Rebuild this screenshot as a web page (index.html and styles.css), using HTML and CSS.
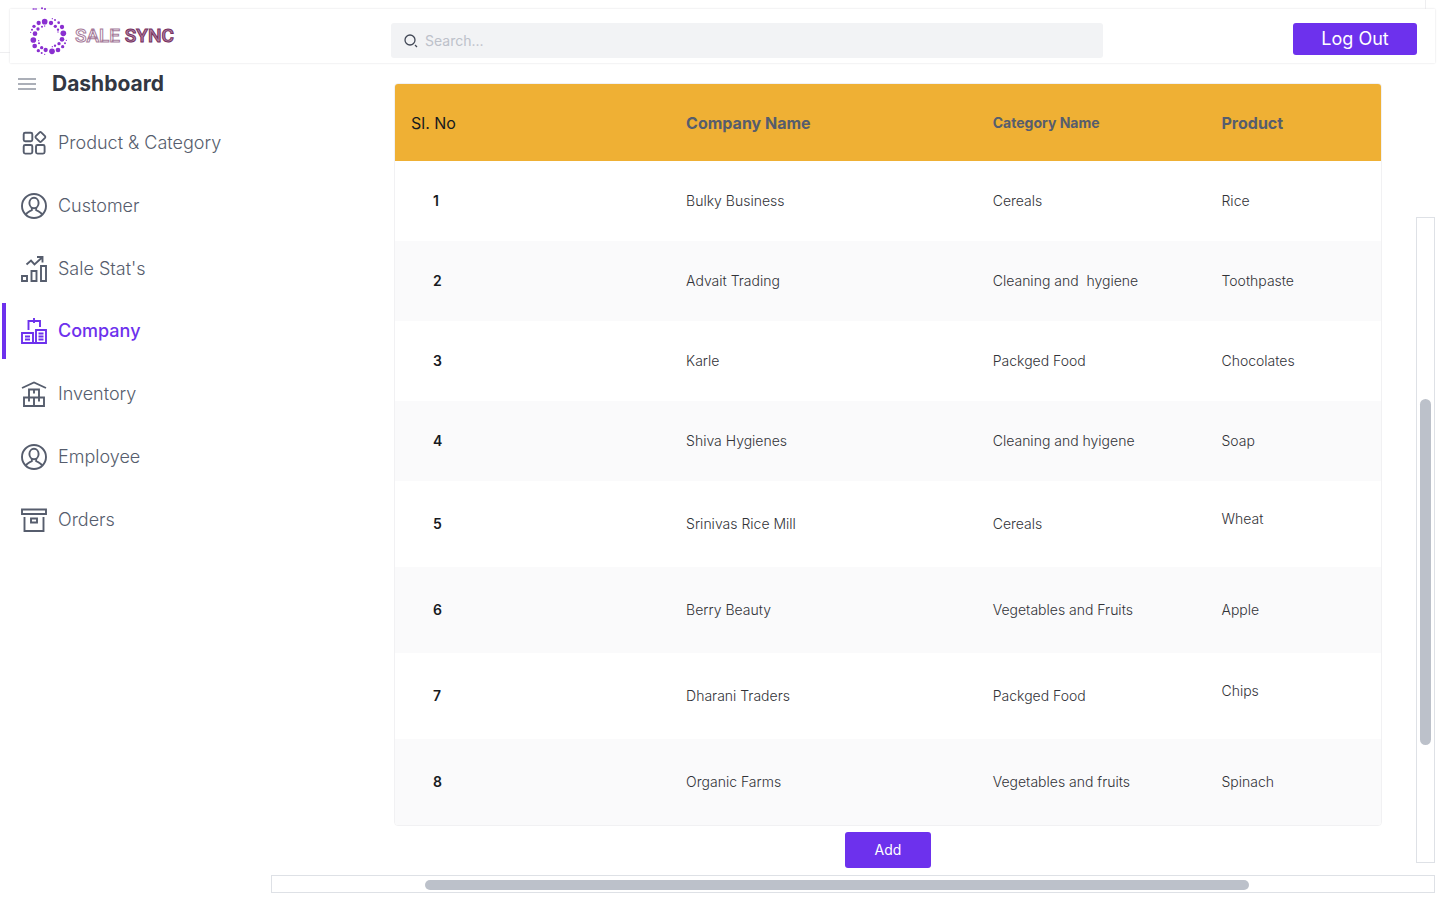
FILE: index.html
```html
<!DOCTYPE html>
<html lang="en">
<head>
<meta charset="utf-8">
<meta name="viewport" content="width=device-width, initial-scale=1">
<title>Sale Sync</title>
<link rel="stylesheet" href="styles.css">
</head>
<body>
<div class="backdrop"></div>
<header class="topbar">
  <a class="brand" href="#">
    <svg class="brand-mark" viewBox="90 48 114 114" aria-hidden="true">
      <g fill="#8a2fd0">
        <circle cx="134" cy="62" r="8.500"/><circle cx="153" cy="66" r="6.500"/><circle cx="116" cy="66" r="6.500"/>
        <circle cx="186" cy="78" r="6.500"/><circle cx="190" cy="97" r="8.500"/><circle cx="186" cy="115" r="7"/>
        <circle cx="105" cy="98" r="7"/><circle cx="100" cy="117" r="8.500"/><circle cx="104" cy="135" r="7"/>
        <circle cx="137" cy="147" r="6.500"/><circle cx="156" cy="151" r="8.500"/><circle cx="174" cy="147" r="7"/>
        <circle cx="102" cy="76" r="5"/><circle cx="114" cy="84" r="5"/><circle cx="166" cy="76" r="5"/>
        <circle cx="176" cy="65" r="4"/><circle cx="177" cy="128" r="5"/><circle cx="188" cy="137" r="5"/>
        <circle cx="115" cy="149" r="5"/><circle cx="125" cy="140" r="5"/>
        <circle cx="126" cy="77" r="3"/><circle cx="134" cy="75" r="2"/><circle cx="174" cy="86" r="3.500"/>
        <circle cx="174" cy="93" r="2"/><circle cx="165" cy="57" r="3"/><circle cx="157" cy="53" r="2"/>
        <circle cx="96" cy="86" r="3"/><circle cx="92" cy="94" r="2"/><circle cx="116" cy="119" r="2"/>
        <circle cx="117" cy="127" r="3"/><circle cx="165" cy="134" r="3.500"/><circle cx="157" cy="137" r="2"/>
        <circle cx="195" cy="127" r="3"/><circle cx="199" cy="118" r="2"/><circle cx="125" cy="156" r="3"/>
        <circle cx="134" cy="160" r="2"/>
        <ellipse cx="101" cy="24" rx="4" ry="2"/><ellipse cx="108" cy="24" rx="3" ry="2"/><circle cx="126" cy="22" r="3"/><circle cx="135" cy="24" r="3"/>
      </g>
    </svg>
    <span class="brand-name"><span class="brand-light">SALE</span> <span class="brand-bold">SYNC</span></span>
  </a>
  <label class="search">
    <svg viewBox="0 0 14 14" aria-hidden="true"><circle cx="6" cy="6" r="5"/><path d="M11 11 L13 13"/></svg>
    <input type="search" placeholder="Search..." aria-label="Search">
  </label>
  <button class="button logout" type="button">Log Out</button>
</header>

<div class="layout">
  <nav class="sidebar" aria-label="Main">
    <div class="sidebar-head">
      <button class="menu-button" type="button" aria-label="Toggle menu">
        <svg viewBox="0 0 18 12"><path d="M0 1H18M0 6H18M0 11H18"/></svg>
      </button>
      <h1>Dashboard</h1>
    </div>
    <ul class="nav-list">
      <li><a href="#">
        <svg class="icon" viewBox="0 0 26 26"><rect x="2.700" y="2.700" width="8.600" height="8.600" rx="1.500"/><rect x="2.700" y="15" width="8.600" height="8.600" rx="1.500"/><rect x="15" y="15" width="8.600" height="8.600" rx="1.500"/><path d="M18.600 2.400 L14.800 6.200 Q14.100 7 14.800 7.800 L18.600 11.600 Q19.400 12.300 20.200 11.600 L24 7.800 Q24.700 7 24 6.200 L20.200 2.400 Q19.400 1.700 18.600 2.400Z"/></svg>
        Product &amp; Category</a></li>
      <li><a href="#">
        <svg class="icon" viewBox="0 0 26 26"><circle cx="13" cy="13" r="12"/><ellipse cx="13" cy="10" rx="4.600" ry="5.200"/><path d="M5 21.500 Q6 19.500 10.800 17.200 V14.500 M21 21.500 Q20 19.500 15.200 17.200 V14.500"/></svg>
        Customer</a></li>
      <li><a href="#">
        <svg class="icon" viewBox="0 0 26 26"><path d="M1 20H6V25H1ZM10.500 15H15.500V25H10.500ZM20 10H25V25H20ZM5.500 8.500 L10 4.500 L13.500 8.500 L21 1.500 M16 1H21.500V6.500"/></svg>
        Sale Stat's</a></li>
      <li><a class="active" href="#" aria-current="page">
        <svg class="icon" viewBox="0 0 26 26"><path d="M1 15H12V25H1ZM15 12H25V25H15ZM12 25H15M7.500 12V3H19V9M13 0V5M4 18.500H9M4 21.500H9M17.500 15.500H22.500M17.500 18.500H22.500M17.500 21.500H22.500"/></svg>
        Company</a></li>
      <li><a href="#">
        <svg class="icon" viewBox="0 0 26 26"><path d="M1 7 L13 1.500 L25 7 M8 8.500H18V16.500H8ZM3 16.500H23V25H3ZM13 16.500V25M13 8.500V12.500M8 16.500V20.500M18 16.500V20.500"/></svg>
        Inventory</a></li>
      <li><a href="#">
        <svg class="icon" viewBox="0 0 26 26"><circle cx="13" cy="13" r="12"/><ellipse cx="13" cy="10" rx="4.600" ry="5.200"/><path d="M5 21.500 Q6 19.500 10.800 17.200 V14.500 M21 21.500 Q20 19.500 15.200 17.200 V14.500"/></svg>
        Employee</a></li>
      <li><a href="#">
        <svg class="icon" viewBox="0 0 26 26"><path d="M1 2.500H25V7H1ZM3.500 10V24H22.500V10M10 11.500H16V15.500H10Z"/></svg>
        Orders</a></li>
    </ul>
  </nav>

  <main class="content">
    <section class="companies">
      <div class="table-frame">
        <table>
          <thead>
            <tr><th class="col-number" scope="col">Sl. No</th><th class="col-company" scope="col">Company Name</th><th class="col-category" scope="col">Category Name</th><th class="col-product" scope="col">Product</th></tr>
          </thead>
          <tbody>
            <tr><td>1</td><td>Bulky Business</td><td>Cereals</td><td>Rice</td></tr>
            <tr><td>2</td><td>Advait Trading</td><td>Cleaning and&nbsp; hygiene</td><td>Toothpaste</td></tr>
            <tr><td>3</td><td>Karle</td><td>Packged Food</td><td>Chocolates</td></tr>
            <tr><td>4</td><td>Shiva Hygienes</td><td>Cleaning and hyigene</td><td>Soap</td></tr>
            <tr class="tall"><td>5</td><td>Srinivas Rice Mill</td><td>Cereals</td><td class="raised">Wheat</td></tr>
            <tr class="tall"><td>6</td><td>Berry Beauty</td><td>Vegetables and Fruits</td><td>Apple</td></tr>
            <tr class="tall"><td>7</td><td>Dharani Traders</td><td>Packged Food</td><td class="raised">Chips</td></tr>
            <tr class="tall"><td>8</td><td>Organic Farms</td><td>Vegetables and fruits</td><td>Spinach</td></tr>
          </tbody>
        </table>
      </div>
      <button class="button add" type="button">Add</button>
    </section>
    <div class="track track-vertical"><div class="thumb"></div></div>
    <div class="track track-horizontal"><div class="thumb"></div></div>
  </main>
</div>
</body>
</html>
```
FILE: styles.css
```css
* {
  box-sizing: border-box;
}

body {
  margin: 0;
  position: relative;
  background: #fff;
  color: #323338;
  font-family: Inter, "Liberation Sans", sans-serif;
  font-size: 14px;
  line-height: 20px;
}

a {
  color: inherit;
  text-decoration: none;
}

button,
input {
  font: inherit;
}

.backdrop {
  position: absolute;
  top: 0;
  left: 0;
  right: 14px;
  height: 53px;
  border: solid #eeeef0;
  border-width: 0 1px 1px 0;
}

.topbar {
  position: relative;
  display: grid;
  grid-template-columns: 381px 1fr 332px;
  align-items: start;
  margin: 9px 5px 0 10px;
  padding: 14px 0 5px;
  background: #fff;
  box-shadow: 0 0 2px #dcdce0;
}

.brand {
  display: flex;
  align-items: center;
  gap: 7px;
  height: 26px;
  padding-left: 20px;
}

.brand-mark {
  width: 38px;
  height: 38px;
  overflow: visible;
}

.brand-name {
  font-family: Roboto, sans-serif;
  font-size: 19px;
  font-weight: 500;
}

.brand-light {
  color: #fff;
  -webkit-text-stroke: 1px #a67b9a;
}

.brand-bold {
  color: #b583a3;
  -webkit-text-stroke: 1px #74305f;
}

.search {
  display: flex;
  align-items: center;
  gap: 7px;
  height: 35px;
  padding: 0 13px;
  border-radius: 3px;
  background: #f2f3f5;
}

.search svg {
  width: 14px;
  height: 14px;
  flex: none;
  fill: none;
  stroke: #424856;
  stroke-width: 1.3;
}

.search input {
  flex: 1;
  min-width: 0;
  padding: 0;
  border: 0;
  outline: 0;
  background: none;
}

.search input::placeholder {
  color: #bdc1ca;
}

.button {
  border: 0;
  border-radius: 3px;
  background: #6d31ed;
  color: #fff;
}

.logout {
  justify-self: end;
  width: 124px;
  height: 32px;
  margin-right: 18px;
  font-size: 18px;
}

.layout {
  display: grid;
  grid-template-columns: 271px 1fr;
  padding-right: 5px;
}

.sidebar-head {
  display: flex;
  align-items: center;
  gap: 16px;
  height: 42px;
  padding-left: 18px;
}

.sidebar-head h1 {
  margin: 0;
  color: #323743;
  font-size: 21px;
  font-weight: 700;
}

.menu-button {
  display: flex;
  padding: 0;
  border: 0;
  background: none;
}

.menu-button svg {
  width: 18px;
  height: 12px;
  stroke: #9095a1;
  stroke-width: 1.6;
}

.nav-list {
  display: grid;
  grid-auto-rows: 1fr;
  align-items: center;
  min-height: 439px;
  margin: 7px 0 0;
  padding: 0 0 0 2px;
  list-style: none;
}

.nav-list a {
  display: flex;
  align-items: center;
  gap: 11px;
  height: 56px;
  padding-left: 15px;
  border-left: 4px solid transparent;
  color: #565d6d;
  font-size: 18px;
  font-weight: 300;
}

.nav-list .active {
  border-color: #6d31ed;
  color: #6d31ed;
  font-weight: 500;
}

.icon {
  width: 26px;
  height: 26px;
  flex: none;
  fill: none;
  stroke: currentColor;
  stroke-width: 1.9;
}

.content {
  display: grid;
  grid-template-columns: 1fr 19px;
}

.companies {
  display: flex;
  flex-direction: column;
  align-items: center;
  gap: 6px;
  padding: 20px 34px 7px 123px;
}

.table-frame {
  width: 100%;
  overflow: hidden;
  border: 1px solid #f1f1f3;
  border-radius: 4px;
}

table {
  width: 100%;
  border-collapse: collapse;
  table-layout: fixed;
}

th,
td {
  padding: 0 0 0 16px;
  text-align: left;
}

thead tr {
  height: 77px;
  background: #efb034;
}

th {
  color: #565d6d;
  font-size: 16px;
  font-weight: 700;
}

.col-number {
  width: 27.9%;
  color: #171a1f;
  font-weight: 400;
}

.col-company {
  width: 31.1%;
}

.col-category {
  width: 23.2%;
  font-size: 14px;
}

tbody tr {
  height: 80px;
}

tbody .tall {
  height: 86px;
}

tbody tr:nth-child(even) {
  background: #fafafb;
}

td {
  font-weight: 300;
}

td:first-child {
  padding-left: 38px;
  color: #171a1f;
  font-weight: 600;
}

td.raised {
  padding-bottom: 10px;
}

.add {
  width: 86px;
  height: 36px;
}

.track {
  display: grid;
  border: 1px solid #dee1e6;
}

.track-vertical {
  grid-template-rows: 181fr 345fr 117fr;
  margin: 154px 0 12px;
  padding: 0 3px;
}

.track-vertical .thumb {
  grid-row: 2;
}

.track-horizontal {
  grid-column: 1 / -1;
  grid-template-columns: 153fr 824fr 185fr;
  height: 18px;
  padding: 4px 0 2px;
}

.track-horizontal .thumb {
  grid-column: 2;
}

.thumb {
  border-radius: 6px;
  background: #bcc1ca;
}
```
